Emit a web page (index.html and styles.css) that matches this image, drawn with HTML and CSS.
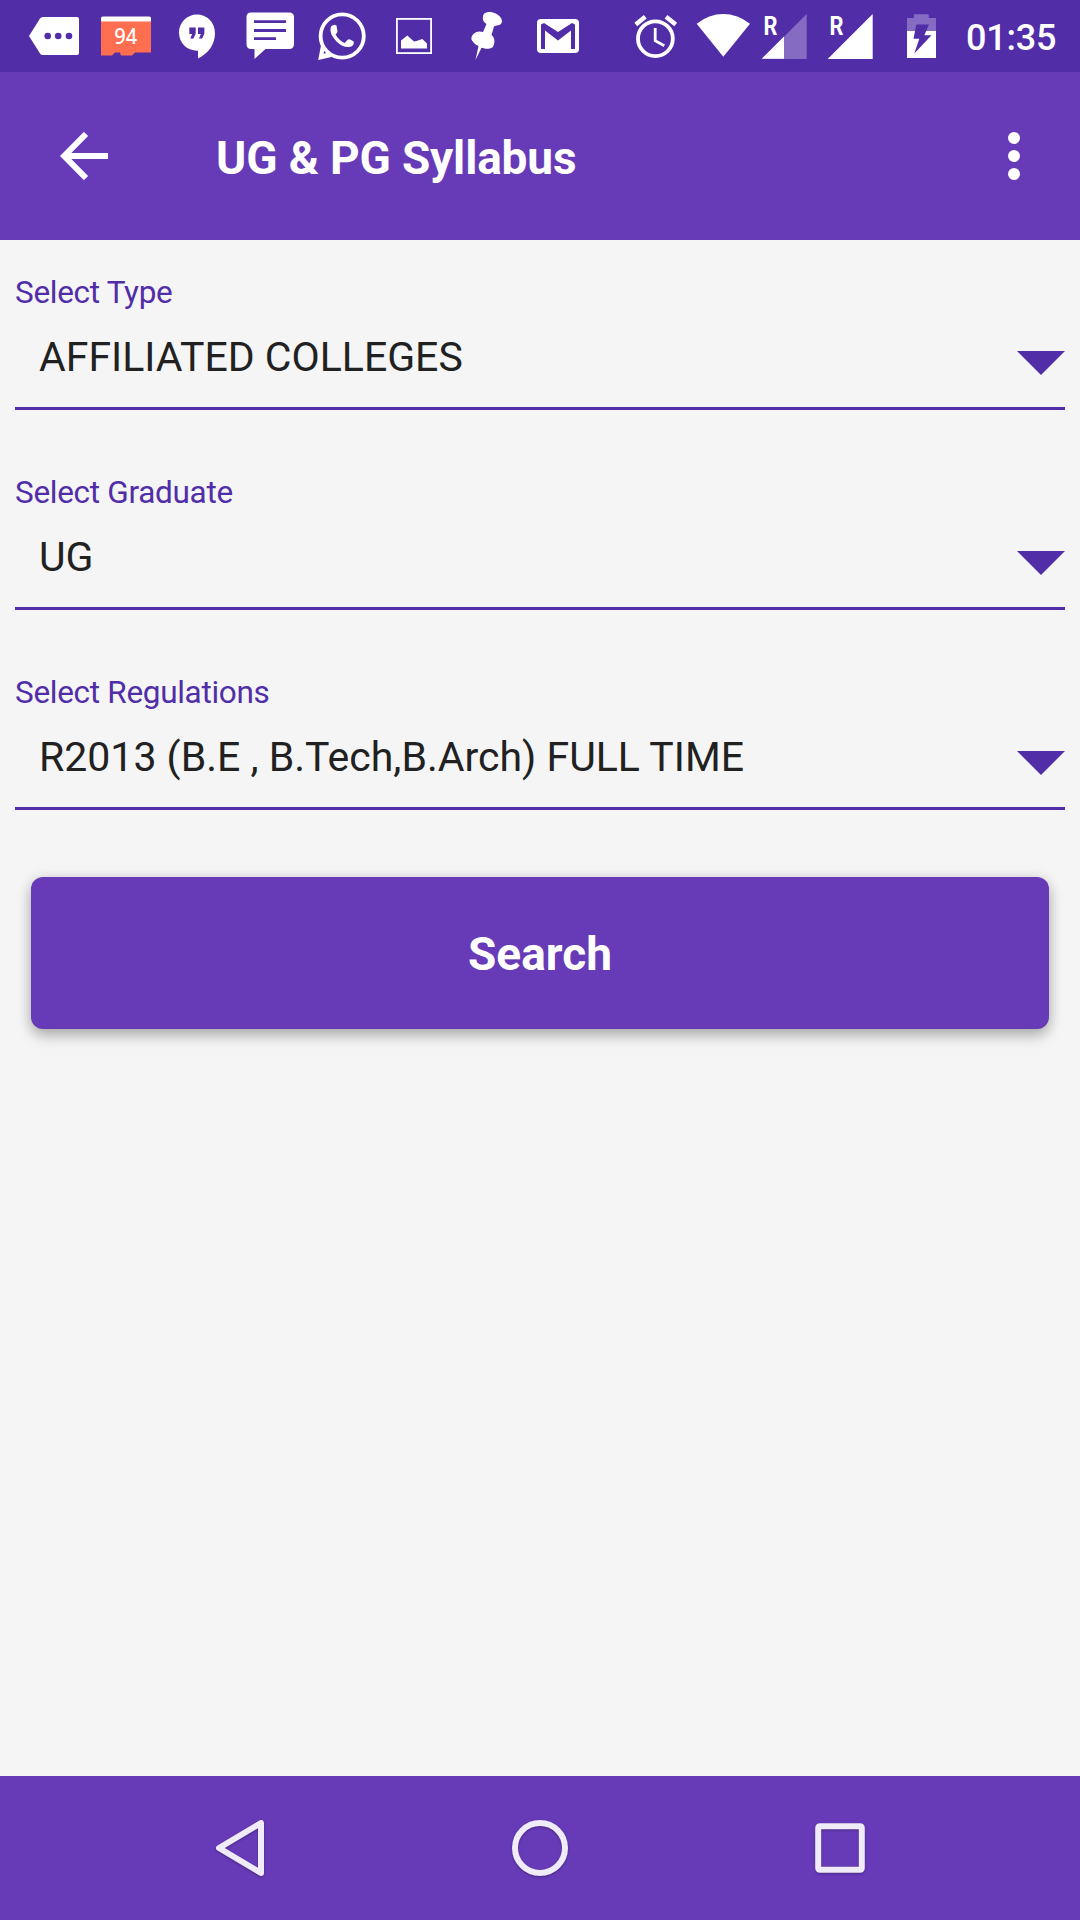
FILE: index.html
```html
<!DOCTYPE html>
<html lang="en">
<head>
<meta charset="utf-8">
<title>UG &amp; PG Syllabus</title>
<link rel="stylesheet" href="styles.css">
</head>
<body>
<div class="screen">
  <div class="status">
    <div class="status-left">
      <svg class="cell" viewBox="0 0 72 72"><path class="w" d="M11 36 22 18.500Q23 17 25 17H59Q61 17 61 19V53Q61 55 59 55H25Q23 55 22 53.500Z"/><circle class="p" cx="29.700" cy="36" r="3.300"/><circle class="p" cx="40.200" cy="36" r="3.300"/><circle class="p" cx="51" cy="36" r="3.300"/></svg>
      <svg class="cell" viewBox="0 0 72 72"><path class="w" d="M11 18Q11 16.500 13 16.500H59Q61 16.500 61 18V22H11Z"/><path class="orange" d="M11 21.500H61V52.500H45L42 55.500H31L30 52.500H25L22 55.500H11Z"/><text class="badge" x="24.300" y="44" textLength="23" lengthAdjust="spacingAndGlyphs">94</text></svg>
      <svg class="cell" viewBox="0 0 72 72"><path class="w" d="M35 14.500C45 14.500 53 22.500 53 33C53 45 46 53.500 36 58.500V50.700C25 51 17 43 17 32.500C17 22.500 25 14.500 35 14.500Z"/><path class="p" d="M27.300 27.500H33.700V33.500L31.500 38.500H28.200L30.200 34H27.300ZM36 27.500H42.400V33.500L40.200 38.500H36.900L38.900 34H36Z"/></svg>
      <svg class="cell" viewBox="0 0 72 72"><path class="w" d="M17 12.500H55Q60 12.500 60 17V44Q60 49 55 49H31.500L20.500 59V49H17Q12.500 49 12.500 44V17Q12.500 12.500 17 12.500Z"/><path class="p" d="M20 20.300H52V23H20ZM20 29H52V32H20ZM20 37.300H42V40H20Z"/></svg>
      <svg class="cell" viewBox="0 0 72 72"><circle class="ring" cx="36.200" cy="36" r="21.600"/><path class="w" d="M15 45.500 12.200 60 25.500 57 22 52.500 17.500 53.800 18.800 49Z"/><path class="w" d="M25 26.500Q28 23.500 30.500 25.500L31.500 31.500Q31 33.500 29.500 34.500Q33 40.500 38.500 43L41.500 40Q42.500 39 44 39.500L47.500 41.200Q49 45.500 43.500 47Q37 47.800 30.500 41.500Q22.500 33 25 26.500Z"/></svg>
      <svg class="cell" viewBox="0 0 72 72"><rect class="frame" x="18.900" y="18.900" width="34.200" height="34.200"/><path class="w" d="M23 40.500 29.300 35.500 36 41.500 38.500 41 44.300 39 49 43.500V48.600H23Z"/></svg>
      <svg class="cell" viewBox="0 0 72 72"><path class="w" d="M33 16.500C33.500 12 39 11.500 43 12.500C49 14 53 19 51.800 22.500C50.500 26 46 25 44 26.500L41.500 35C45.500 38 45 44 42.500 47.500C38 49.800 35 48.500 31.500 47.700L25.500 60L28.500 46C26.500 45.500 24 43.500 22 40.500C20.500 38 22 34.500 25.500 32.500Q29 30.800 33 32L36.500 24C33.500 22 32.300 20 33 16.500Z"/></svg>
      <svg class="cell" viewBox="0 0 72 72"><rect class="w" x="15" y="19" width="42" height="34" rx="4"/><path class="p" d="M19 49V24.500L22 23 36 32 50 23 53 24.500V49H49V30.500L36 40.500 23 30.500V49Z"/></svg>
    </div>
    <div class="status-right">
      <svg class="cell" viewBox="0 0 72 72"><circle class="clock" cx="35.400" cy="38.700" r="17.400"/><path class="ear" d="M15.800 24.500 25.300 16.700M46 16.700 55.700 24.500"/><path class="hand" d="M35.200 28V40.700L44.300 45.700"/></svg>
      <svg class="cell wifi" viewBox="0 0 64 72"><path class="w" d="M4.700 23.700Q17 14 31.300 14T58 23.700L31.300 56.700Z"/></svg>
      <svg class="cell signal" viewBox="0 0 66 72"><path class="faint" d="M5.700 59 50.700 14V59Z"/><path class="w" d="M5.700 58.700 28 36.400V58.700Z"/><text class="roam" x="7.500" y="35.300" textLength="14" lengthAdjust="spacingAndGlyphs">R</text></svg>
      <svg class="cell signal" viewBox="0 0 66 72"><path class="w" d="M5.700 59 50.700 14V59Z"/><text class="roam" x="7.500" y="35.300" textLength="14" lengthAdjust="spacingAndGlyphs">R</text></svg>
      <svg class="cell signal" viewBox="0 0 66 72"><path class="faint" d="M26 14.300H40.700V18H48V31H19V18H26Z"/><path class="w" d="M19 31H48V58H19Z"/><path class="p" d="M28.300 24.500H41L36.300 35.300H43.500L26.300 53.500 31.300 38.700H25.500Z"/></svg>
      <span class="time">01:35</span>
    </div>
  </div>

  <header class="appbar">
    <svg class="back" viewBox="0 0 48 48"><path d="M26 2 4.200 24 26 46M4 24H48"/></svg>
    <h1 class="title">UG &amp; PG Syllabus</h1>
    <svg class="more" viewBox="0 0 12 48"><circle cx="6" cy="6" r="6"/><circle cx="6" cy="24" r="6"/><circle cx="6" cy="42" r="6"/></svg>
  </header>

  <main class="form">
    <div class="field">
      <div class="label">Select Type</div>
      <div class="select"><span class="value">AFFILIATED COLLEGES</span><svg class="caret" viewBox="0 0 48 24"><path d="M0 0H48L24 24Z"/></svg></div>
    </div>
    <div class="field">
      <div class="label">Select Graduate</div>
      <div class="select"><span class="value">UG</span><svg class="caret" viewBox="0 0 48 24"><path d="M0 0H48L24 24Z"/></svg></div>
    </div>
    <div class="field">
      <div class="label">Select Regulations</div>
      <div class="select"><span class="value">R2013 (B.E , B.Tech,B.Arch) FULL TIME</span><svg class="caret" viewBox="0 0 48 24"><path d="M0 0H48L24 24Z"/></svg></div>
    </div>
    <button class="search">Search</button>
  </main>

  <nav class="navbar">
    <svg class="nav" viewBox="0 0 72 72"><path d="M57 11V61L15 36Z"/></svg>
    <svg class="nav" viewBox="0 0 72 72"><circle cx="36" cy="36" r="25"/></svg>
    <svg class="nav" viewBox="0 0 72 72"><rect x="14.200" y="14.200" width="43.600" height="43.600" rx="1.500"/></svg>
  </nav>
</div>
</body>
</html>
```
FILE: styles.css
```css
* { box-sizing: border-box; }
body { margin: 0; font-family: Roboto, sans-serif; background: #f5f5f5; }
svg { display: block; flex: none; }

.screen { width: 1080px; height: 1920px; display: flex; flex-direction: column; overflow: hidden; }

.status { height: 72px; flex: none; background: #512da8; display: flex; justify-content: space-between; padding: 0 24px 0 18px; }
.status-left, .status-right { display: flex; }
.cell { width: 72px; height: 72px; }
.wifi { width: 64px; }
.signal { width: 66px; }
.status-right { width: 436px; }
.time { color: #fff; font-size: 36px; font-weight: 500; line-height: 76px; padding-left: 12px; letter-spacing: -0.2px; white-space: nowrap; }
.w { fill: #fff; }
.p { fill: #512da8; }
.orange { fill: #ff6e4e; }
.faint { fill: #fff; fill-opacity: .3; }
.badge { fill: #fff; font: 500 21px "Noto Sans", sans-serif; }
.roam { fill: #fff; font: 700 25px Roboto, sans-serif; }
.ring, .clock { fill: none; stroke: #fff; stroke-width: 3.8; }
.frame { fill: none; stroke: #fff; stroke-width: 1.8; }
.ear { stroke: #fff; stroke-width: 4.5; }
.hand { fill: none; stroke: #fff; stroke-width: 2.8; }

.appbar { height: 168px; flex: none; background: #673ab7; display: flex; align-items: center; padding: 0 60px; }
.back { width: 48px; height: 48px; fill: none; stroke: #fff; stroke-width: 6; }
.title { margin: 0 auto 0 108px; color: #fff; font-size: 46px; font-weight: 700; line-height: 56px; letter-spacing: -0.16px; padding-top: 4px; white-space: nowrap; }
.more { width: 12px; height: 48px; fill: #fff; }

.form { flex: 1; padding: 32px 15px 0; }
.field { height: 200px; }
.label { height: 40px; color: #512da8; font-size: 31.500px; line-height: 42px; letter-spacing: -0.3px; }
.select { height: 98px; border-bottom: 3px solid #512da8; display: flex; justify-content: space-between; padding-left: 24px; }
.value { color: #212121; font-size: 41px; line-height: 48px; padding-top: 21px; white-space: nowrap; }
.caret { width: 48px; height: 24px; margin-top: 39px; fill: #512da8; }
.search { display: block; width: 1018px; height: 152px; margin: 5px 16px 0; padding: 3px 0 0; border: 0; border-radius: 12px; background: #673ab7; color: #fff; font: 700 46px/149px Roboto, sans-serif; box-shadow: 0 7px 14px rgba(0,0,0,.26), 0 0 14px rgba(0,0,0,.1); }

.navbar { height: 144px; flex: none; background: #673ab7; display: flex; justify-content: center; align-items: center; gap: 228px; }
.nav { width: 72px; height: 72px; fill: none; stroke: #f0ebf8; stroke-width: 6; stroke-linejoin: round; filter: drop-shadow(0 1px 1px rgba(0,0,0,.3)); }
```
